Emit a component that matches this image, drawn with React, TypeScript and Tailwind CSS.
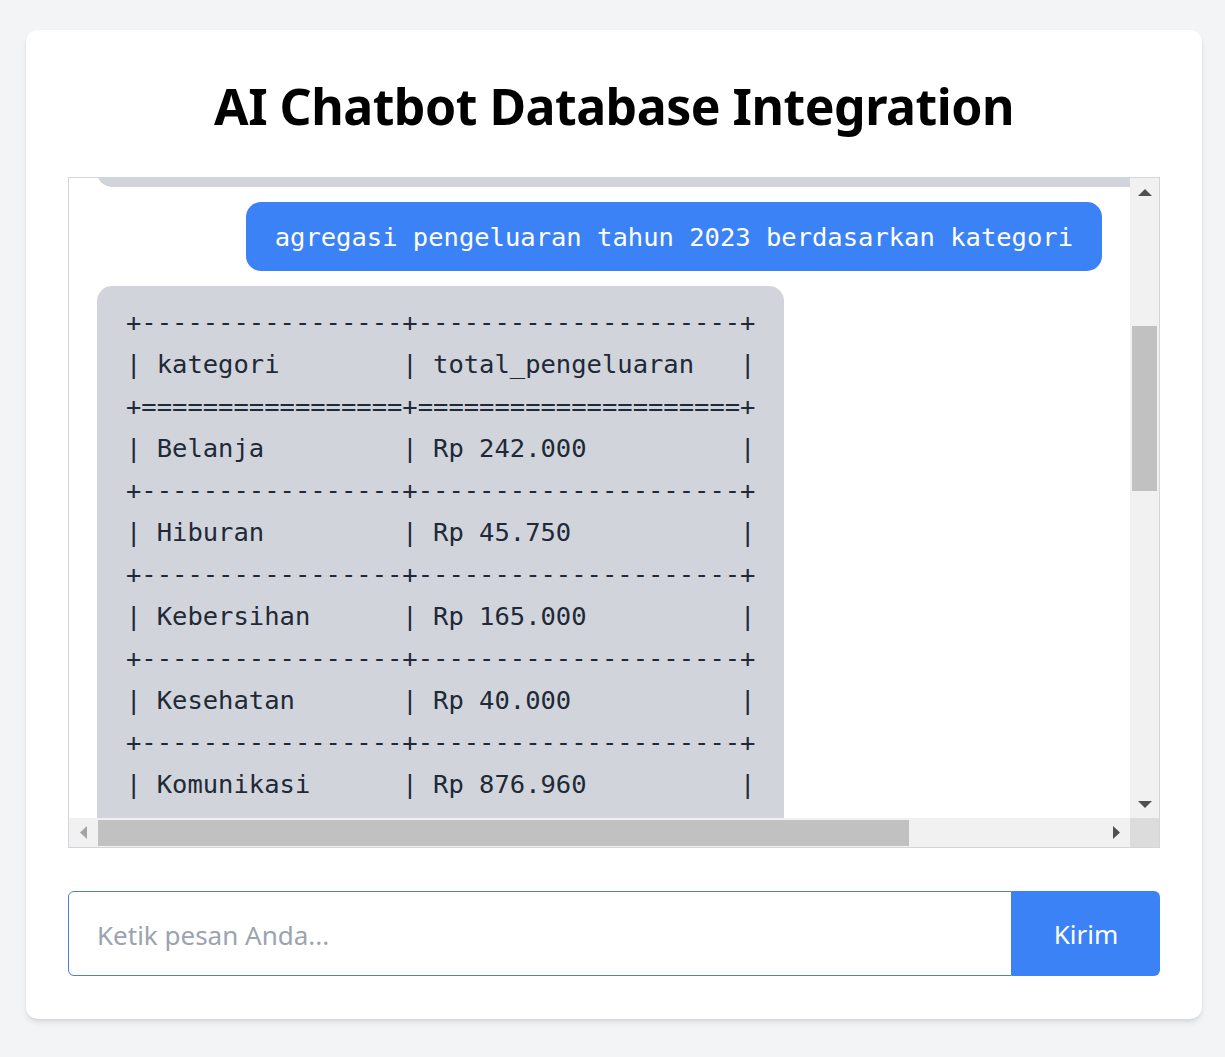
import React, { useLayoutEffect, useRef, useState } from 'react';

interface Message {
    from: 'user' | 'bot';
    text: string;
}

const line = (widths: number[], ch: string) =>
    '+' + widths.map((w) => ch.repeat(w)).join('+') + '+';

const row = (widths: number[], cells: string[]) =>
    '|' + cells.map((c, i) => (' ' + c).padEnd(widths[i])).join('|') + '|';

const asciiTable = (headers: string[], rows: string[][], widths: number[]) => {
    const out = [line(widths, '-'), row(widths, headers), line(widths, '=')];
    rows.forEach((r) => {
        out.push(row(widths, r));
        out.push(line(widths, '-'));
    });
    return out.join('\n');
};

const kategori: string[][] = [
    ['Belanja', 'Rp 242.000'],
    ['Hiburan', 'Rp 45.750'],
    ['Kebersihan', 'Rp 165.000'],
    ['Kesehatan', 'Rp 40.000'],
    ['Komunikasi', 'Rp 876.960'],
    ['Lainnya', 'Rp 58.500'],
    ['Makanan', 'Rp 1.254.500'],
    ['Minuman', 'Rp 87.000'],
    ['Olahraga', 'Rp 150.000'],
    ['Pakaian', 'Rp 320.000'],
    ['Pendidikan', 'Rp 500.000'],
    ['Perawatan', 'Rp 95.000'],
    ['Rumah Tangga', 'Rp 210.300'],
    ['Sosial', 'Rp 100.000'],
    ['Tagihan', 'Rp 1.050.000'],
    ['Transportasi', 'Rp 412.500'],
    ['Utilitas', 'Rp 385.000'],
    ['Zakat', 'Rp 250.000'],
];

const messages: Message[] = [
    { from: 'user', text: 'tampilkan 2 transaksi terakhir' },
    {
        from: 'bot',
        text:
            'Berikut 2 transaksi terakhir:\n' +
            asciiTable(
                ['tanggal', 'kategori', 'deskripsi', 'jumlah'],
                [
                    ['2023-12-30', 'Makanan', 'Makan malam keluarga', 'Rp 185.000'],
                    ['2023-12-29', 'Transportasi', 'Isi bensin motor', 'Rp 50.000'],
                ],
                [12, 14, 34, 15]
            ),
    },
    { from: 'user', text: 'agregasi pengeluaran tahun 2023 berdasarkan kategori' },
    {
        from: 'bot',
        text: asciiTable(['kategori', 'total_pengeluaran'], kategori, [17, 21]),
    },
];

const Arrow: React.FC<{ dir: 'up' | 'down' | 'left' | 'right'; muted?: boolean }> = ({ dir, muted }) => {
    const fill = muted ? '#a3a3a3' : '#505050';
    if (dir === 'up' || dir === 'down') {
        return (
            <svg width="14" height="7" viewBox="0 0 14 7">
                <path d={dir === 'up' ? 'M0 7L7 0L14 7z' : 'M0 0L14 0L7 7z'} fill={fill} />
            </svg>
        );
    }
    return (
        <svg width="7" height="13" viewBox="0 0 7 13">
            <path d={dir === 'right' ? 'M0 0L7 6.5L0 13z' : 'M7 0L7 13L0 6.5z'} fill={fill} />
        </svg>
    );
};

const TRACK_V = 584;
const TRACK_H = 1005;

export default function App() {
    const boxRef = useRef<HTMLDivElement>(null);
    const lastUserRef = useRef<HTMLDivElement>(null);
    const [bars, setBars] = useState({ vTop: 0, vSize: 160, hLeft: 0, hSize: 800 });

    useLayoutEffect(() => {
        const box = boxRef.current;
        if (!box || !lastUserRef.current) return;
        // keep the latest question near the top, like the screenshot
        box.scrollTop = lastUserRef.current.offsetTop - 24;
        setBars({
            vTop: (box.scrollTop / box.scrollHeight) * TRACK_V,
            vSize: (box.clientHeight / box.scrollHeight) * TRACK_V,
            hLeft: (box.scrollLeft / box.scrollWidth) * TRACK_H,
            hSize: (box.clientWidth / box.scrollWidth) * TRACK_H,
        });
    }, []);

    return (
        <div className="min-h-screen bg-gray-100 pt-[30px] pl-[26px] font-['Noto_Sans','Open_Sans',sans-serif]">
            <div className="w-[1176px] bg-white rounded-[12px] shadow-md px-[42px] pt-[42px] pb-[43px]">
                <h1 className="text-[50px] leading-[69px] tracking-[-0.5px] font-bold text-black text-center mb-[36px]">
                    AI Chatbot Database Integration
                </h1>

                <div className="h-[671px] border border-gray-300 grid grid-cols-[1fr_29px] grid-rows-[640px_29px]">
                    <div
                        ref={boxRef}
                        className="relative overflow-hidden p-[28px] flex flex-col gap-[15px]"
                    >
                        {messages.map((msg, index) =>
                            msg.from === 'user' ? (
                                <div key={index} className="flex justify-end shrink-0">
                                    <div
                                        ref={index === 2 ? lastUserRef : undefined}
                                        className="bg-[#3b82f6] text-white rounded-[15px] px-[29px] pt-[14px] pb-[13px] font-['DejaVu_Sans_Mono',monospace] text-[25.5px] leading-[42px] whitespace-pre"
                                    >
                                        {msg.text}
                                    </div>
                                </div>
                            ) : (
                                <div key={index} className="flex justify-start shrink-0">
                                    <pre className="bg-[#d1d5db] text-[#1f2937] rounded-[15px] px-[29px] py-[15px] font-['DejaVu_Sans_Mono',monospace] text-[25.5px] leading-[42px] w-max">
                                        {msg.text}
                                    </pre>
                                </div>
                            )
                        )}
                    </div>

                    {/* vertical scrollbar */}
                    <div className="bg-[#f1f1f1] flex flex-col">
                        <div className="h-[28px] flex items-center justify-center">
                            <Arrow dir="up" />
                        </div>
                        <div className="relative flex-1">
                            <div
                                className="absolute left-[2px] right-[2px] bg-[#c1c1c1]"
                                style={{ top: bars.vTop, height: bars.vSize }}
                            />
                        </div>
                        <div className="h-[28px] flex items-center justify-center">
                            <Arrow dir="down" />
                        </div>
                    </div>

                    {/* horizontal scrollbar */}
                    <div className="bg-[#f1f1f1] flex">
                        <div className="w-[28px] flex items-center justify-center">
                            <Arrow dir="left" muted />
                        </div>
                        <div className="relative flex-1">
                            <div
                                className="absolute top-[2px] bottom-[1px] bg-[#c1c1c1]"
                                style={{ left: bars.hLeft + 1, width: bars.hSize }}
                            />
                        </div>
                        <div className="w-[28px] flex items-center justify-center">
                            <Arrow dir="right" />
                        </div>
                    </div>
                    <div className="bg-[#dcdcdc]" />
                </div>

                <div className="flex mt-[43px] h-[85px]">
                    <input
                        type="text"
                        placeholder="Ketik pesan Anda..."
                        className="flex-1 min-w-0 border border-[#4a80d4] rounded-l-[6px] px-[28px] pt-[3px] text-[26px] text-gray-800 placeholder:text-[#9ca3af] outline-none"
                    />
                    <button className="w-[148px] bg-[#3b82f6] text-white text-[26px] pt-[2px] rounded-r-[6px]">
                        Kirim
                    </button>
                </div>
            </div>
        </div>
    );
}
